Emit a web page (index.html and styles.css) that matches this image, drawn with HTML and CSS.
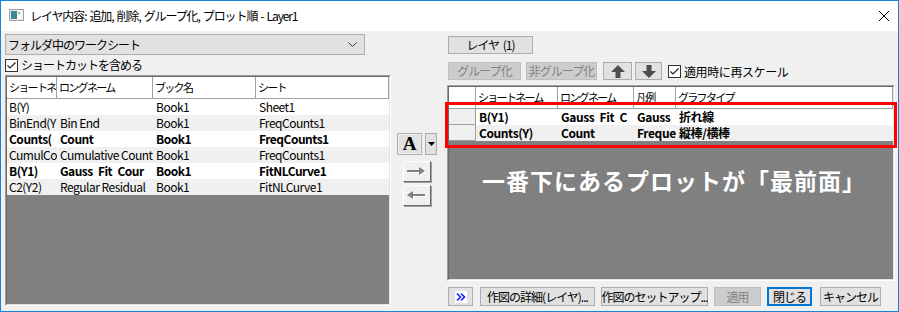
FILE: index.html
```html
<!DOCTYPE html>
<html>
<head>
    <title>レイヤ内容</title>
    <link rel="stylesheet" href="styles.css">
</head>
<body>
    <div class="window">
        <div class="titlebar">
            <svg class="app-icon" width="15" height="12" viewBox="0 0 15 12">
                <rect x="0.5" y="0.5" width="14" height="11" fill="#ececec" stroke="#a0a0a0"/>
                <rect x="2" y="2" width="6" height="8" fill="#3d8796"/>
                <rect x="8" y="2" width="5" height="8" fill="#fafafa"/>
                <rect x="9" y="3" width="2" height="2" fill="#7dbf7a"/>
            </svg>
            <span class="title-text">レイヤ内容: 追加, 削除, グループ化, プロット順 - Layer1</span>
            <svg class="close-icon" width="10" height="10" viewBox="0 0 10 10">
                <path d="M0 0 L10 10 M10 0 L0 10" stroke="#000" stroke-width="1"/>
            </svg>
        </div>

        <div class="dialog-body">
            <!-- 左: ワークシート一覧 -->
            <div class="left-pane">
                <div class="combo">
                    <span class="ui-label">フォルダ中のワークシート</span>
                    <svg width="9" height="5" viewBox="0 0 9 5"><polyline points="0.5,0.5 4.5,4.5 8.5,0.5" fill="none" stroke="#333"/></svg>
                </div>
                <div class="check-row">
                    <span class="checkbox"><svg width="11" height="11" viewBox="0 0 11 11"><polyline points="1.5,5.5 4,8 9.5,2.5" fill="none" stroke="#222" stroke-width="1.2"/></svg></span>
                    <span class="ui-label">ショートカットを含める</span>
                </div>
                <div class="grid-box left-grid">
                    <div class="grid-inner">
                        <div class="grid-row grid-head">
                            <div class="cell">ショートネ</div>
                            <div class="cell">ロングネーム</div>
                            <div class="cell">ブック名</div>
                            <div class="cell">シート</div>
                        </div>
                        <div class="grid-row row-light">
                            <div class="cell">B(Y)</div>
                            <div class="cell"></div>
                            <div class="cell">Book1</div>
                            <div class="cell">Sheet1</div>
                        </div>
                        <div class="grid-row row-dim">
                            <div class="cell">BinEnd(Y</div>
                            <div class="cell">Bin End</div>
                            <div class="cell">Book1</div>
                            <div class="cell">FreqCounts1</div>
                        </div>
                        <div class="grid-row row-light bold">
                            <div class="cell">Counts(</div>
                            <div class="cell">Count</div>
                            <div class="cell">Book1</div>
                            <div class="cell">FreqCounts1</div>
                        </div>
                        <div class="grid-row row-dim">
                            <div class="cell">CumulCo</div>
                            <div class="cell">Cumulative Count</div>
                            <div class="cell">Book1</div>
                            <div class="cell">FreqCounts1</div>
                        </div>
                        <div class="grid-row row-light bold">
                            <div class="cell">B(Y1)</div>
                            <div class="cell">Gauss Fit Cour</div>
                            <div class="cell">Book1</div>
                            <div class="cell">FitNLCurve1</div>
                        </div>
                        <div class="grid-row row-dim">
                            <div class="cell">C2(Y2)</div>
                            <div class="cell">Regular Residual</div>
                            <div class="cell">Book1</div>
                            <div class="cell">FitNLCurve1</div>
                        </div>
                    </div>
                </div>
            </div>

            <!-- 中央: 追加/削除ボタン -->
            <div class="mid-pane">
                <div class="font-row">
                    <div class="btn font-btn">A</div>
                    <div class="btn font-drop">
                        <svg width="7" height="4" viewBox="0 0 7 4"><path d="M0 0 H7 L3.5 4 Z" fill="#000"/></svg>
                    </div>
                </div>
                <div class="move-btn">
                    <svg width="20" height="11" viewBox="0 0 20 11">
                        <path d="M1 5 H13 V2 L19 6 L13 10 V7 H1 Z" fill="#fff"/>
                        <path d="M0 4 H12 V1 L18 5 L12 9 V6 H0 Z" fill="#808080"/>
                    </svg>
                </div>
                <div class="move-btn gap-small">
                    <svg width="20" height="11" viewBox="0 0 20 11">
                        <path d="M19 5 H7 V2 L1 6 L7 10 V7 H19 Z" fill="#fff"/>
                        <path d="M18 4 H6 V1 L0 5 L6 9 V6 H18 Z" fill="#808080"/>
                    </svg>
                </div>
            </div>

            <!-- 右: レイヤ内のプロット -->
            <div class="right-pane">
                <div class="btn layer-btn">レイヤ (1)</div>
                <div class="toolbar">
                    <div class="btn disabled group-btn">グループ化</div>
                    <div class="btn disabled ungroup-btn">非グループ化</div>
                    <div class="btn arrow-btn up-btn">
                        <svg width="14" height="13" viewBox="0 0 14 13"><path d="M7 0 L14 7 H9.5 V13 H4.5 V7 H0 Z" fill="#4d4d4d"/></svg>
                    </div>
                    <div class="btn arrow-btn down-btn">
                        <svg width="14" height="13" viewBox="0 0 14 13"><path d="M7 13 L14 6 H9.5 V0 H4.5 V6 H0 Z" fill="#4d4d4d"/></svg>
                    </div>
                    <span class="checkbox"><svg width="11" height="11" viewBox="0 0 11 11"><polyline points="1.5,5.5 4,8 9.5,2.5" fill="none" stroke="#222" stroke-width="1.2"/></svg></span>
                    <span class="ui-label rescale-label">適用時に再スケール</span>
                </div>
                <div class="grid-box right-grid">
                    <div class="grid-inner">
                        <div class="grid-row grid-head">
                            <div class="cell"></div>
                            <div class="cell">ショートネーム</div>
                            <div class="cell">ロングネーム</div>
                            <div class="cell">凡例</div>
                            <div class="cell">グラフタイプ</div>
                        </div>
                        <div class="grid-row row-light bold">
                            <div class="cell row-head"></div>
                            <div class="cell">B(Y1)</div>
                            <div class="cell">Gauss Fit C</div>
                            <div class="cell">Gauss</div>
                            <div class="cell">折れ線</div>
                        </div>
                        <div class="grid-row row-dim bold">
                            <div class="cell row-head"></div>
                            <div class="cell">Counts(Y)</div>
                            <div class="cell">Count</div>
                            <div class="cell">Freque</div>
                            <div class="cell">縦棒/横棒</div>
                        </div>
                        <div class="grid-note">一番下にあるプロットが「最前面」</div>
                    </div>
                </div>
                <div class="footer">
                    <div class="btn more-btn">
                        <svg width="12" height="12" viewBox="0 0 12 12">
                            <rect width="12" height="12" fill="#fff"/>
                            <polyline points="2,2.5 5.5,6 2,9.5" fill="none" stroke="#1a1aff" stroke-width="1.6"/>
                            <polyline points="6,2.5 9.5,6 6,9.5" fill="none" stroke="#1a1aff" stroke-width="1.6"/>
                        </svg>
                    </div>
                    <div class="btn detail-btn">作図の詳細(レイヤ)...</div>
                    <div class="btn setup-btn">作図のセットアップ...</div>
                    <div class="btn disabled apply-btn">適用</div>
                    <div class="btn default-btn close-btn">閉じる</div>
                    <div class="btn cancel-btn">キャンセル</div>
                </div>
            </div>
        </div>

        <!-- 注目枠 -->
        <div class="highlight-box"></div>
    </div>
</body>
</html>
```

FILE: styles.css
```css
body {
    margin: 0;
    font-family: "Noto Sans CJK JP", "Noto Sans", sans-serif;
    font-size: 12px;
    color: #000;
}
.window {
    position: relative;
    width: 899px;
    height: 312px;
    box-sizing: border-box;
    border: 1px solid #1883d7;
    background-color: #f0f0f0;
    display: flex;
    flex-direction: column;
}
.titlebar {
    height: 30px;
    flex: none;
    background-color: #fff;
    display: flex;
    align-items: center;
    padding-left: 8px;
}
.app-icon {
    margin-top: -2px;
}
.title-text {
    margin-left: 6px;
    line-height: 16px;
    letter-spacing: -1.1px;
    word-spacing: 1.5px;
}
.close-icon {
    margin-left: auto;
    margin-right: 9px;
}
.dialog-body {
    flex: 1;
    display: flex;
}
.ui-label {
    letter-spacing: -1px;
}

/* 共通ボタン */
.btn {
    box-sizing: border-box;
    border: 1px solid #adadad;
    background-color: #e1e1e1;
    display: flex;
    align-items: center;
    justify-content: center;
    white-space: nowrap;
    line-height: 16px;
    letter-spacing: -1px;
    word-spacing: 2px;
}
.btn.disabled {
    background-color: #cccccc;
    border-color: #bfbfbf;
    color: #838383;
}
.btn.default-btn {
    border: 2px solid #0078d7;
}
.checkbox {
    width: 13px;
    height: 13px;
    box-sizing: border-box;
    border: 1px solid #333;
    background-color: #fff;
    display: flex;
    align-items: center;
    justify-content: center;
}

/* 左 */
.left-pane {
    width: 386px;
    margin-left: 4px;
}
.combo {
    margin-top: 3px;
    width: 360px;
    height: 21px;
    box-sizing: border-box;
    border: 1px solid #adadad;
    background-color: #e1e1e1;
    display: flex;
    align-items: center;
    justify-content: space-between;
    padding: 0 7px 0 2px;
    line-height: 16px;
}
.check-row {
    height: 20px;
    display: flex;
    align-items: center;
    gap: 3px;
    line-height: 16px;
}
.grid-box {
    box-sizing: border-box;
    border: 1px solid;
    border-color: #a0a0a0 #fff #fff #a0a0a0;
}
.grid-inner {
    height: 100%;
    box-sizing: border-box;
    border: 1px solid;
    border-color: #696969 #e3e3e3 #e3e3e3 #696969;
    background-color: #808080;
    overflow: hidden;
}
.left-grid {
    height: 231px;
}
.grid-row {
    display: grid;
    height: 16px;
    line-height: 16px;
}
.left-grid .grid-row {
    grid-template-columns: 50px 96px 103px 1fr;
}
.left-grid .cell {
    letter-spacing: -0.5px;
}
.right-grid .grid-row {
    grid-template-columns: 27px 82px 76px 42px 1fr;
}
.right-grid .cell {
    letter-spacing: -0.4px;
}
.grid-row.grid-head {
    height: 21px;
    line-height: 20px;
    background-color: #fff;
    border-bottom: 1px solid #a0a0a0;
}
.cell {
    box-sizing: border-box;
    padding-left: 3px;
    white-space: nowrap;
    overflow: hidden;
}
.grid-row .cell:first-child {
    padding-left: 2px;
}
.grid-head .cell {
    border-right: 1px solid #a0a0a0;
    font-size: 11px;
    letter-spacing: -1.7px;
    padding-left: 2px;
}
.row-light {
    background-color: #fff;
}
.row-dim {
    background-color: #f0f0f0;
}
.bold {
    font-weight: bold;
    word-spacing: 3px;
}
.cell.row-head {
    background-color: #f0f0f0;
    border-right: 1px solid #a0a0a0;
    border-bottom: 1px solid #a0a0a0;
}

/* 中央 */
.mid-pane {
    width: 56px;
    padding-top: 102px;
    display: flex;
    flex-direction: column;
}
.font-row {
    display: flex;
    gap: 3px;
    margin-left: 6px;
}
.font-btn {
    width: 25px;
    height: 22px;
    font-family: "Liberation Serif", serif;
    font-weight: bold;
    font-size: 19px;
    line-height: 20px;
    letter-spacing: 0;
    box-shadow: inset 0 0 0 1px #f0f0f0;
}
.font-drop {
    width: 12px;
    height: 22px;
}
.move-btn {
    width: 28px;
    height: 21px;
    margin-left: 12px;
    margin-top: 6px;
    box-sizing: border-box;
    border: 1px solid;
    border-color: #fff #696969 #696969 #fff;
    box-shadow: 1px 1px 0 #a0a0a0;
    background-color: #f0f0f0;
    display: flex;
    align-items: center;
    justify-content: center;
}
.move-btn.gap-small {
    margin-top: 3px;
}

/* 右 */
.right-pane {
    width: 448px;
    display: flex;
    flex-direction: column;
}
.layer-btn {
    margin-top: 5px;
    margin-left: 1px;
    width: 85px;
    height: 18px;
}
.toolbar {
    margin-top: 8px;
    margin-left: 1px;
    height: 18px;
    display: flex;
    align-items: center;
}
.group-btn {
    width: 73px;
    height: 18px;
}
.ungroup-btn {
    width: 71px;
    height: 18px;
    margin-left: 5px;
}
.arrow-btn {
    height: 18px;
}
.up-btn {
    width: 29px;
    margin-left: 6px;
}
.down-btn {
    width: 27px;
    margin-left: 3px;
}
.toolbar .checkbox {
    margin-left: 6px;
}
.rescale-label {
    margin-left: 3px;
    letter-spacing: -0.4px;
}
.right-grid {
    margin-top: 5px;
    height: 196px;
}
.grid-note {
    padding: 28px 0 0 33px;
    color: #fff;
    font-size: 23px;
    line-height: 23px;
    letter-spacing: 1px;
    font-weight: bold;
}
.footer {
    margin-top: 6px;
    margin-left: 1px;
    height: 19px;
    display: flex;
}
.footer .btn {
    height: 19px;
}
.more-btn {
    width: 25px;
}
.detail-btn {
    width: 115px;
    margin-left: 7px;
}
.setup-btn {
    width: 107px;
    margin-left: 6px;
}
.apply-btn {
    width: 47px;
    margin-left: 6px;
}
.close-btn {
    width: 45px;
    margin-left: 6px;
}
.cancel-btn {
    width: 61px;
    margin-left: 8px;
}

/* 説明用の赤枠 */
.highlight-box {
    position: absolute;
    left: 444px;
    top: 101px;
    width: 452px;
    height: 46px;
    box-sizing: border-box;
    border: 3px solid #f00;
}
```
